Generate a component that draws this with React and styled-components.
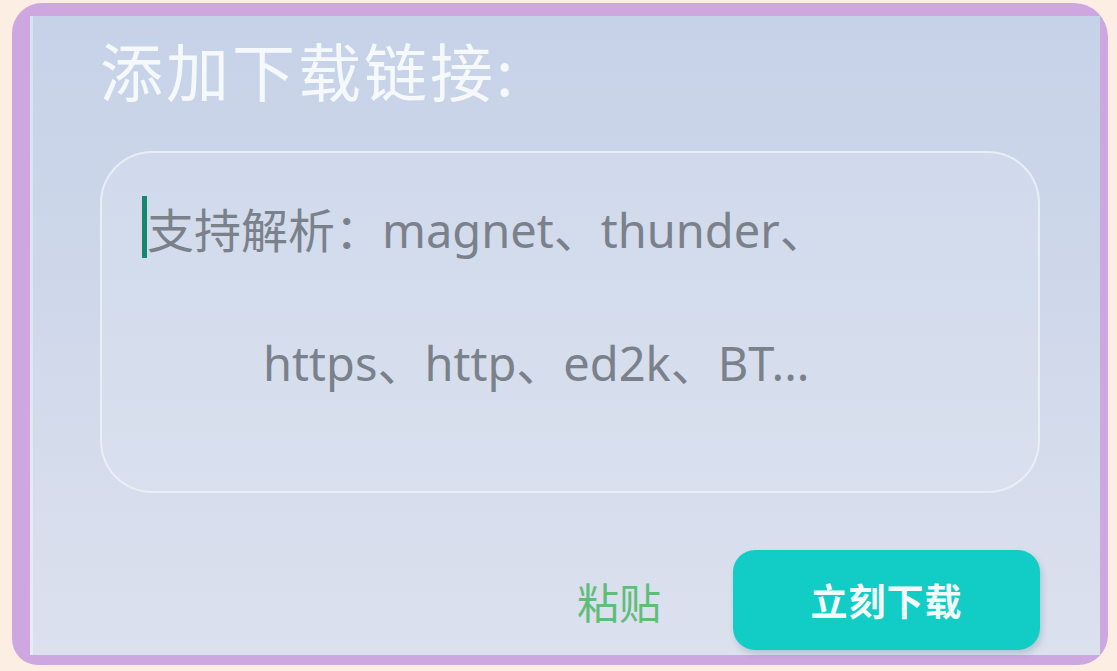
import * as React from "react";
import { styled, createGlobalStyle } from "styled-components";

const GlobalStyle = createGlobalStyle`
	html, body {
		margin: 0;
		padding: 0;
		background: #fdeee3;
	}
`;

const Page = styled.div`
	width: 1117px;
	height: 671px;
	box-sizing: border-box;
	padding: 3px 9px 6px 12px;
	font-family: "Noto Sans", "Noto Sans CJK SC", sans-serif;
`;

const Frame = styled.div`
	height: 100%;
	box-sizing: border-box;
	background: #cea7e1;
	border-radius: 30px 34px 30px 26px;
	padding: 13px 8px 10px 18px;
`;

const Panel = styled.div`
	display: flex;
	flex-direction: column;
	height: 100%;
	box-sizing: border-box;
	padding: 0 60px 5px 67px;
	background: linear-gradient(180deg, #c6d2e8 0%, #cfd8ea 45%, #dce1ee 100%);
	border-left: 3px solid rgba(255, 255, 255, 0.35);
`;

const Title = styled.h1`
	margin: 18px 0 0;
	font-family: "Noto Sans CJK SC", sans-serif;
	font-size: 63px;
	font-weight: 400;
	line-height: 70px;
	color: #f6f9fc;
	letter-spacing: 3px;
`;

const InputBox = styled.div`
	margin-top: 47px;
	height: 342px;
	box-sizing: border-box;
	border: 2px solid rgba(240, 244, 250, 0.75);
	border-radius: 52px;
	background: rgba(226, 232, 244, 0.28);
	padding: 38px 0 0 40px;
`;

const Line = styled.div`
	display: flex;
	align-items: center;
	height: 72px;
	padding-left: ${(p) => p.$indent || 0}px;
	margin-top: ${(p) => p.$gap || 0}px;
	font-family: "Noto Sans", "Noto Sans CJK SC", sans-serif;
	font-size: 47px;
	color: #7b818b;
	white-space: nowrap;
`;

const Caret = styled.span`
	display: inline-block;
	width: 5px;
	height: 62px;
	background: #16876e;
`;

const Footer = styled.div`
	margin-top: auto;
	display: flex;
	align-items: center;
	justify-content: flex-end;
	gap: 72px;
`;

const TextButton = styled.button`
	border: none;
	background: none;
	padding: 0;
	font-family: "Noto Sans CJK SC", sans-serif;
	font-size: 42px;
	font-weight: 400;
	color: #60bd79;
	cursor: pointer;
`;

const PrimaryButton = styled.button`
	width: 307px;
	height: 100px;
	border: none;
	border-radius: 22px;
	background: #12cdc5;
	box-shadow: 2px 4px 6px rgba(60, 120, 130, 0.25);
	font-family: "Noto Sans CJK SC", sans-serif;
	font-size: 37px;
	font-weight: 700;
	letter-spacing: 1px;
	color: #f4fbfb;
	cursor: pointer;
`;

function App() {
	return (
		<>
			<GlobalStyle />
			<Page>
				<Frame>
					<Panel>
						<Title>添加下载链接:</Title>
						<InputBox>
							<Line>
								<Caret />
								支持解析：magnet、thunder、
							</Line>
							<Line $indent={121} $gap={61}>
								https、http、ed2k、BT...
							</Line>
						</InputBox>
						<Footer>
							<TextButton>粘贴</TextButton>
							<PrimaryButton>立刻下载</PrimaryButton>
						</Footer>
					</Panel>
				</Frame>
			</Page>
		</>
	);
}

export default App;
